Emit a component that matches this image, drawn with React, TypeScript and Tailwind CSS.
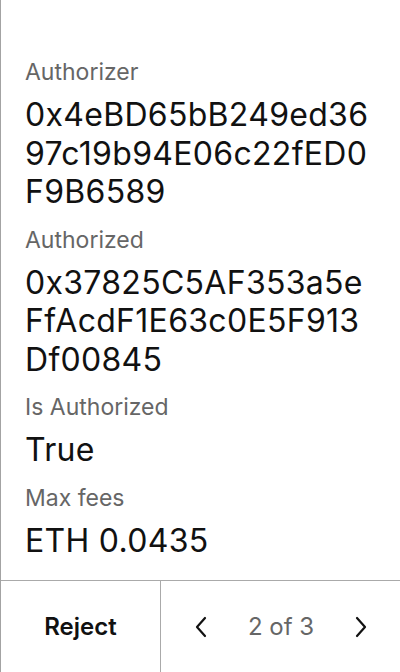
const fields = [
  { label: 'Authorizer', value: '0x4eBD65bB249ed3697c19b94E06c22fED0F9B6589' },
  { label: 'Authorized', value: '0x37825C5AF353a5eFfAcdF1E63c0E5F913Df00845' },
  { label: 'Is Authorized', value: 'True' },
  { label: 'Max fees', value: 'ETH 0.0435' },
]

function Chevron({ dir }: { dir: 'left' | 'right' }) {
  return (
    <svg width="16" height="24" viewBox="0 0 16 24" fill="none" stroke="#111" strokeWidth="2.2" strokeLinecap="round" strokeLinejoin="round">
      {dir === 'left' ? <path d="M12 3 L4 12 L12 21" /> : <path d="M4 3 L12 12 L4 21" />}
    </svg>
  )
}

export default function App() {
  return (
    <div
      className="w-[400px] h-[672px] flex flex-col bg-white border-l border-[#a3a3a3] overflow-hidden"
      style={{ fontFamily: 'Inter, "Noto Sans", sans-serif' }}
    >
      <div className="flex-1 px-6 pt-[57px] flex flex-col">
        {fields.map((f) => (
          <div key={f.label} className="mb-[13px]">
            <div className="text-[23px] leading-[30px] text-[#666]">{f.label}</div>
            <div className="mt-[9px] text-[32px] leading-[38.5px] tracking-[0.3px] text-[#111] break-all">{f.value}</div>
          </div>
        ))}
      </div>
      <div className="h-[92px] shrink-0 flex border-t border-[#aaa]">
        <button className="w-[160px] flex items-center justify-center text-[24px] font-semibold text-[#111] border-r border-[#aaa]">
          Reject
        </button>
        <div className="flex-1 flex items-center justify-between pl-[32px] pr-[31px]">
          <Chevron dir="left" />
          <span className="text-[24px] text-[#666]">2 of 3</span>
          <Chevron dir="right" />
        </div>
      </div>
    </div>
  )
}
